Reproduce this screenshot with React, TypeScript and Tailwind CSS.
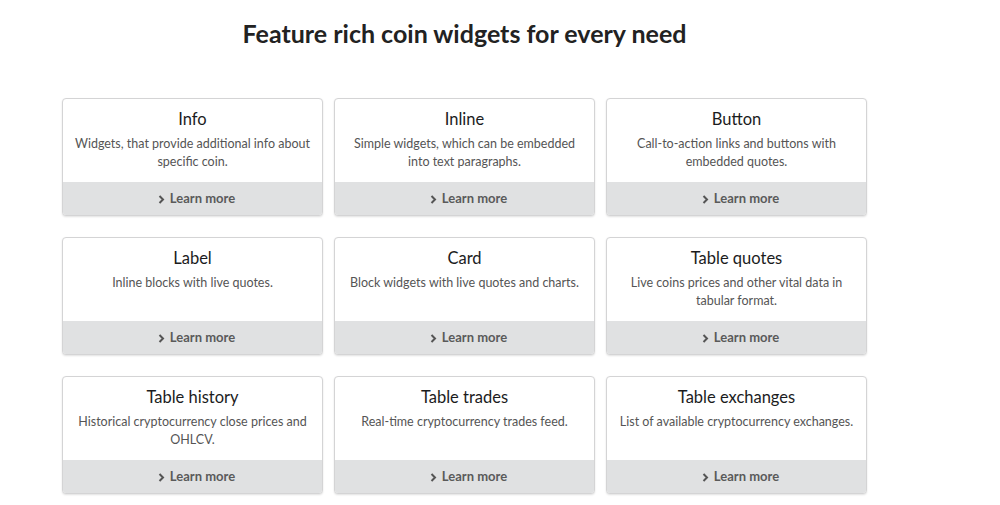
import React from "react";

const items = [
  ["Info", "Widgets, that provide additional info about specific coin."],
  ["Inline", "Simple widgets, which can be embedded into text paragraphs."],
  ["Button", "Call-to-action links and buttons with embedded quotes."],
  ["Label", "Inline blocks with live quotes."],
  ["Card", "Block widgets with live quotes and charts."],
  ["Table quotes", "Live coins prices and other vital data in tabular format."],
  ["Table history", "Historical cryptocurrency close prices and OHLCV."],
  ["Table trades", "Real-time cryptocurrency trades feed."],
  ["Table exchanges", "List of available cryptocurrency exchanges."],
];

export default function App() {
  return (
    <div className="w-[1000px] h-[505px] bg-white overflow-hidden" style={{ fontFamily: "Lato, 'Open Sans', sans-serif" }}>
      <div className="ml-[62px] w-[805px]">
        <h1 className="pt-[17px] text-center text-[25px] leading-[32px] font-bold text-[#222]">
          Feature rich coin widgets for every need
        </h1>
        <div className="mt-[49px] grid grid-cols-3 gap-x-[11px] gap-y-[21px]">
          {items.map(([t, d]) => (
            <div key={t} className="h-[118px] rounded-[4px] border border-[#d4d4d5] bg-white shadow-[0_1px_2px_rgba(0,0,0,0.12)] flex flex-col overflow-hidden">
              <div className="h-[83px] px-[10px] pt-[9px] text-center">
                <div className="text-[16.5px] leading-[22px] text-[#1b1c1d]">{t}</div>
                <div className="mt-[5px] text-[12.5px] leading-[18px] text-[#555]">{d}</div>
              </div>
              <div className="flex-1 bg-[#e0e1e2] flex items-center justify-center gap-[5px] pl-[8px] pt-[1px] text-[13px] font-bold text-[#5a5a5a]">
                <svg width="7" height="9" viewBox="0 0 7 9" className="mt-[1px]">
                  <path d="M1.5 1 L5 4.5 L1.5 8" fill="none" stroke="#555" strokeWidth="2" />
                </svg>
                <span>Learn more</span>
              </div>
            </div>
          ))}
        </div>
      </div>
    </div>
  );
}
